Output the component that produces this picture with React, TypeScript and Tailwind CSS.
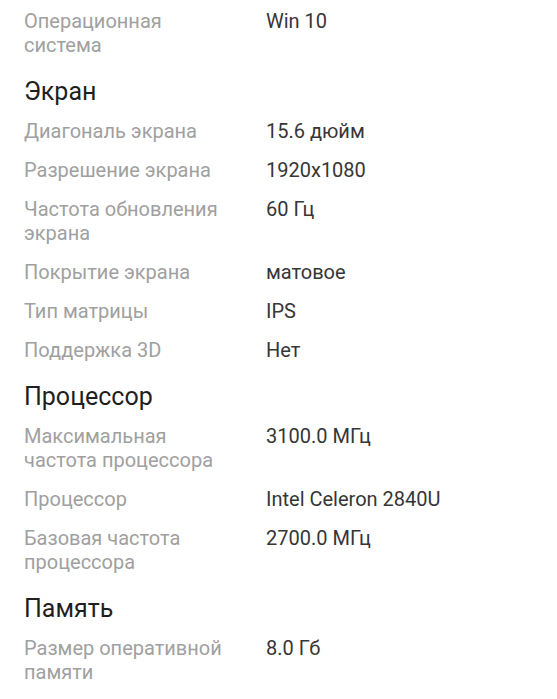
import React from 'react';

type Row = { label: string; value: string };
type Section = { title?: string; rows: Row[] };

const SECTIONS: Section[] = [
  { rows: [{ label: 'Операционная система', value: 'Win 10' }] },
  {
    title: 'Экран',
    rows: [
      { label: 'Диагональ экрана', value: '15.6 дюйм' },
      { label: 'Разрешение экрана', value: '1920x1080' },
      { label: 'Частота обновления экрана', value: '60 Гц' },
      { label: 'Покрытие экрана', value: 'матовое' },
      { label: 'Тип матрицы', value: 'IPS' },
      { label: 'Поддержка 3D', value: 'Нет' },
    ],
  },
  {
    title: 'Процессор',
    rows: [
      { label: 'Максимальная частота процессора', value: '3100.0 МГц' },
      { label: 'Процессор', value: 'Intel Celeron 2840U' },
      { label: 'Базовая частота процессора', value: '2700.0 МГц' },
    ],
  },
  {
    title: 'Память',
    rows: [{ label: 'Размер оперативной памяти', value: '8.0 Гб' }],
  },
];

const App: React.FC = () => {
  return (
    <div className="min-h-screen bg-white font-['Roboto',sans-serif] pt-[1.5px]">
      {SECTIONS.map((section, i) => (
        <div key={i}>
          {section.title && (
            <h2 className="pl-6 pt-[11.5px] pb-[3.5px] text-[25px] leading-[32px] text-[#1f1f1f]">
              {section.title}
            </h2>
          )}
          {section.rows.map((row, idx) => (
            <div key={idx} className="flex pl-6 py-[7.5px] text-[20px] leading-[24px]">
              <div className="w-[242px] shrink-0 pr-8 text-[#a0a0a0]">{row.label}</div>
              <div className="text-[#363636]">{row.value}</div>
            </div>
          ))}
        </div>
      ))}
    </div>
  );
};

export default App;
